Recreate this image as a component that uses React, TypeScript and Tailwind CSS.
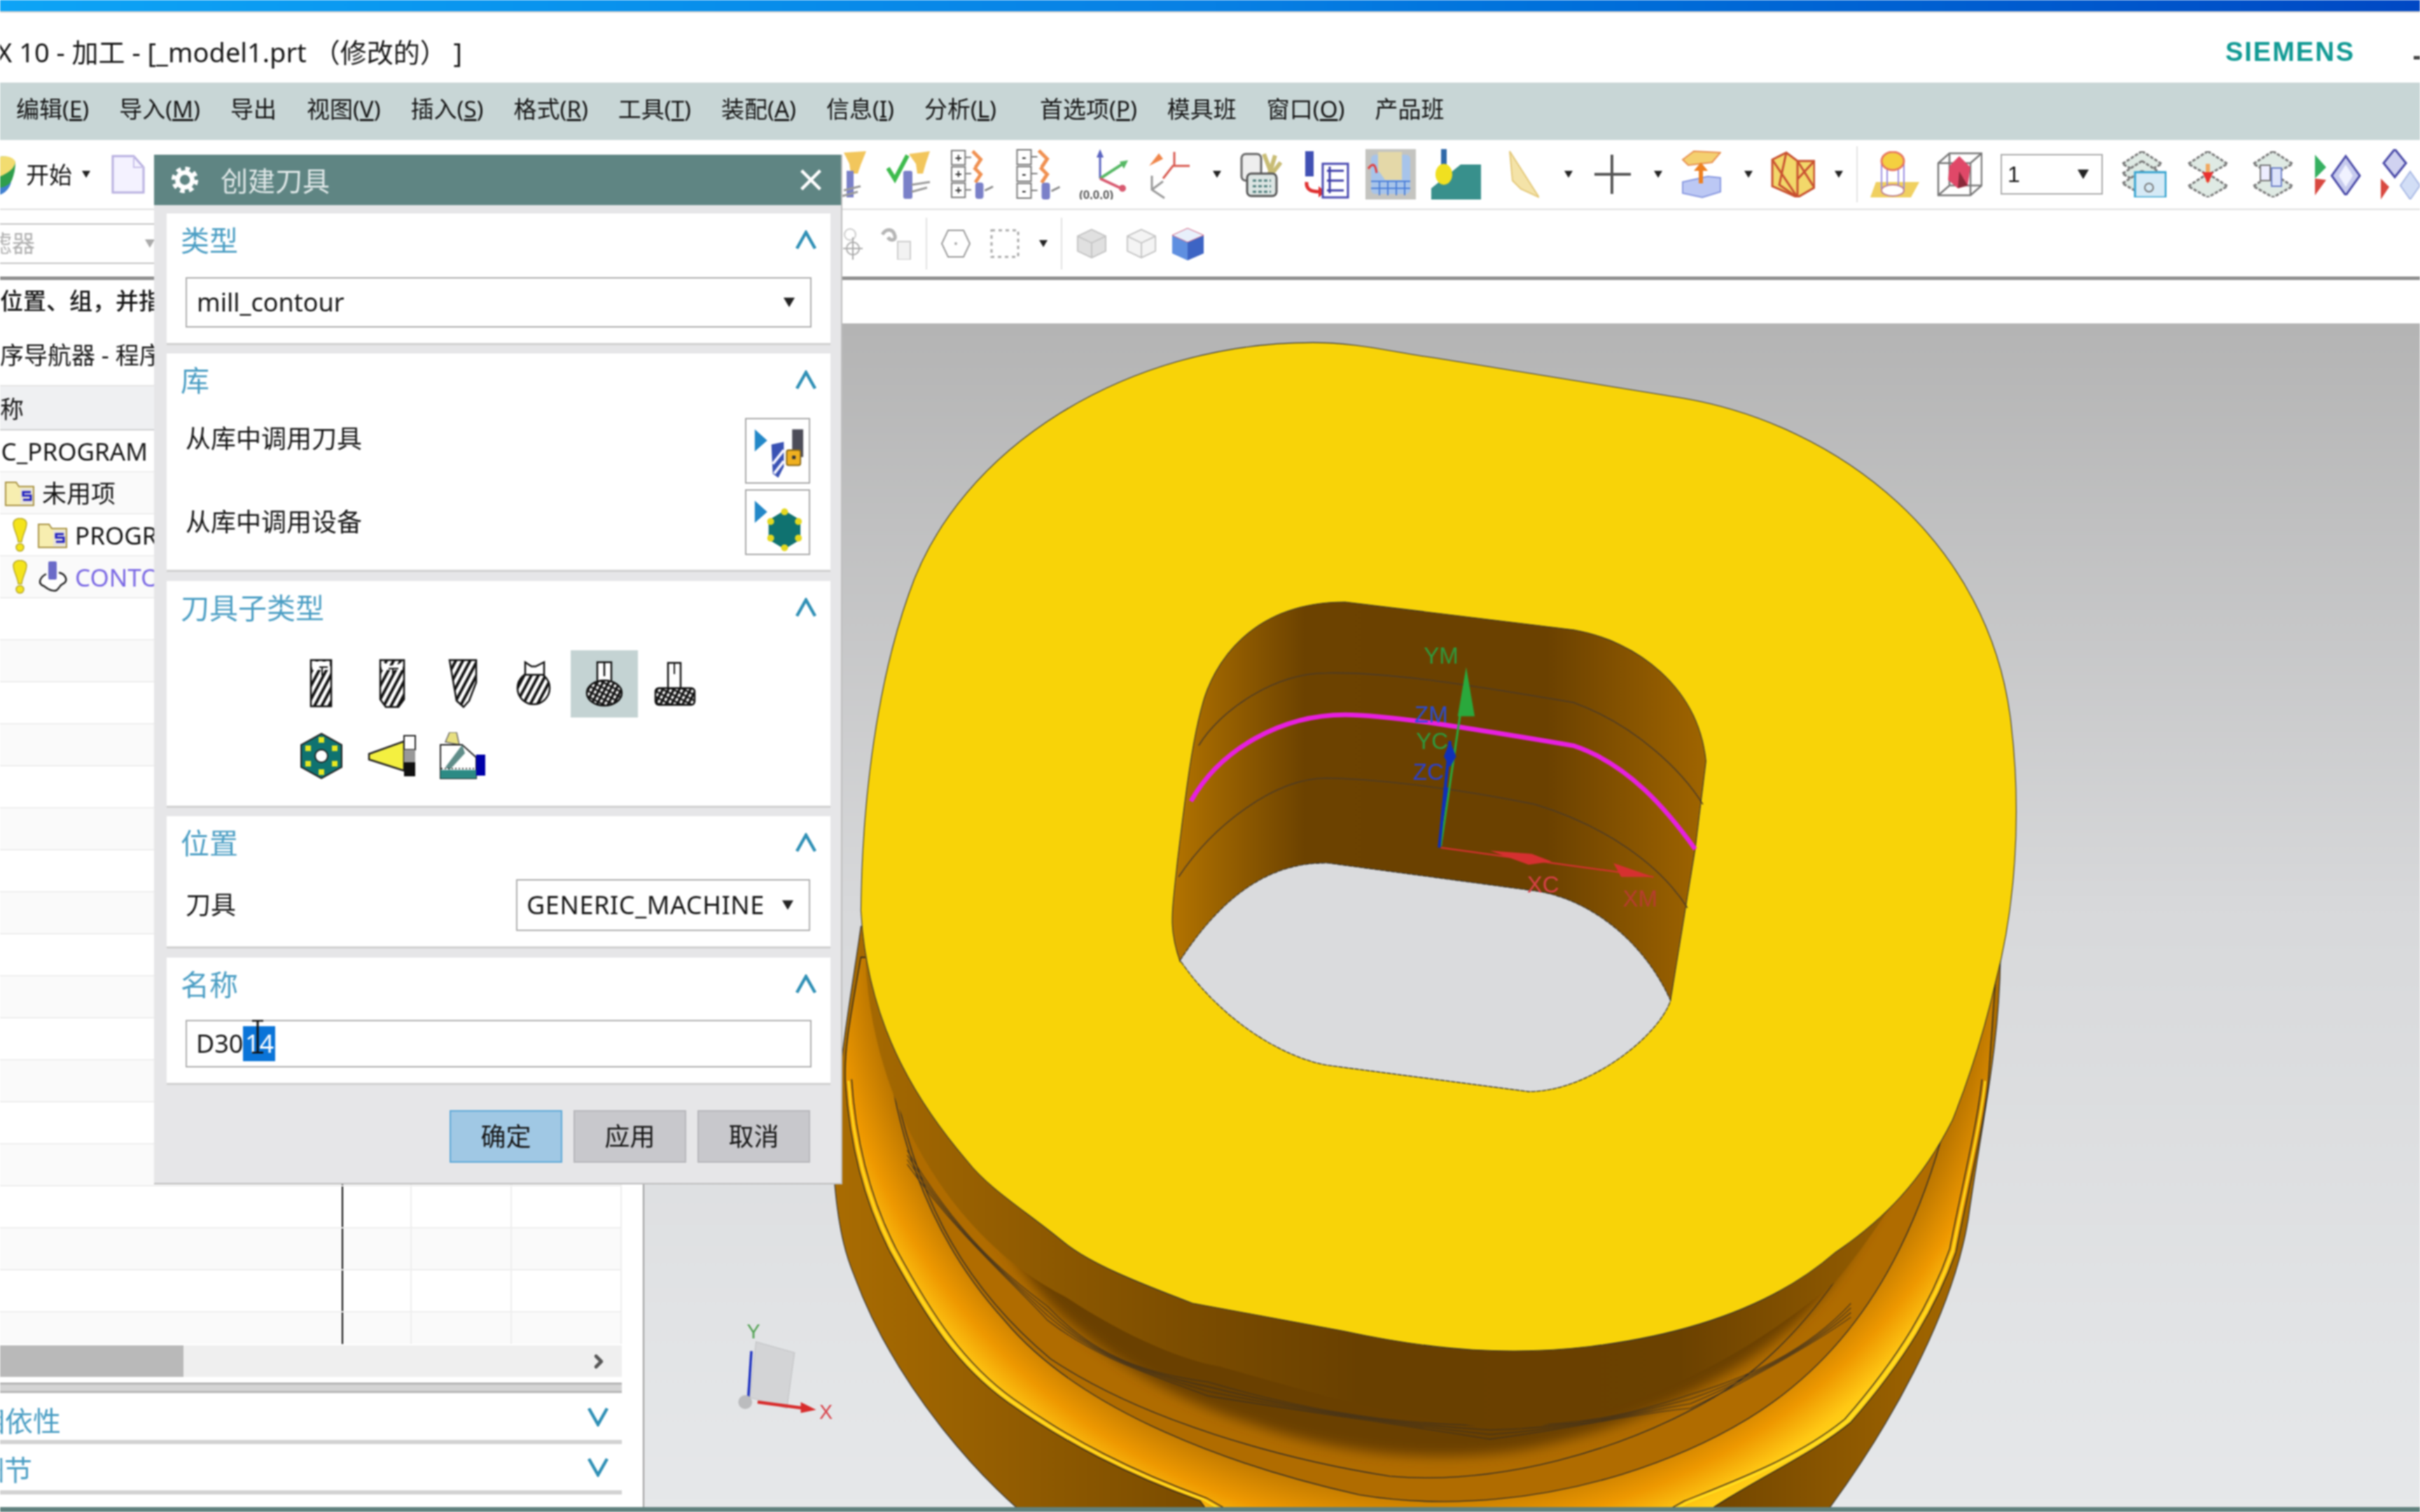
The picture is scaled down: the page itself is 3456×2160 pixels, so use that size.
import { ChevronRight } from "lucide-react"

const Drop = ({ className = "" }: { className?: string }) => (
  <svg viewBox="0 0 12 12" className={`w-[12px] h-[12px] ${className}`}>
    <polygon points="0,1 12,1 6,11" fill="#222" />
  </svg>
)

const Up = () => (
  <svg viewBox="0 0 32 28" className="w-[32px] h-[28px]">
    <path d="M3 26 L16 3 L29 26" fill="none" stroke="#2e8fb5" strokeWidth="4.5" />
  </svg>
)

const Down = () => (
  <svg viewBox="0 0 32 28" className="w-[32px] h-[28px]">
    <path d="M3 2 L16 25 L29 2" fill="none" stroke="#2e8fb5" strokeWidth="4.5" />
  </svg>
)

const Card = ({ title, className, children }: { title: string; className: string; children: React.ReactNode }) => (
  <div className={`bg-white border-b-[3px] border-[#d0d0d0] ${className}`}>
    <div className="h-[80px] flex items-center justify-between pl-[20px] pr-[19px] pb-[4px]">
      <span className="text-[41px] leading-none text-[#4b9ec4]">{title}</span>
      <Up />
    </div>
    {children}
  </div>
)

// toolbar icons
const Funnel = ({ className }: { className: string }) => (
  <svg viewBox="0 0 68 70" className={className}>
    <path d="M36 4 L68 2 L60 22 L56 34 L46 34 L44 20Z" fill="#f2c65c" />
    <rect x="40" y="30" width="10" height="38" fill="#7a80c8" />
    <path d="M36 58 L60 52 M34 66 L56 60" stroke="#9a9a9a" strokeWidth="3" />
  </svg>
)

const FunnelCheck = ({ className }: { className: string }) => (
  <svg viewBox="0 0 63 70" className={className}>
    <path d="M32 6 L62 2 L56 20 L52 34 L44 34 L42 20Z" fill="#f2c65c" />
    <path d="M2 26 L12 42 L30 8" fill="none" stroke="#3dbb4c" strokeWidth="6" />
    <rect x="24" y="30" width="13" height="40" rx="3" fill="#7a80c8" />
    <path d="M36 50 L62 46 M36 60 L58 54" stroke="#9a9a9a" strokeWidth="3" />
  </svg>
)

const TreeIcon = ({ className, sign }: { className: string; sign: string }) => (
  <svg viewBox="0 0 64 72" className={className}>
    {[1, 25, 49].map((y) => (
      <g key={y}>
        <rect x="1" y={y} width="20" height="21" fill="#fff" stroke="#777" strokeWidth="2" />
        <text x="11" y={y + 17} textAnchor="middle" fontSize="18" fill="#333" fontWeight="700">{sign}</text>
        <line x1="21" y1={y + 10} x2="30" y2={y + 10} stroke="#777" strokeWidth="2" />
      </g>
    ))}
    <path d="M32 2 L44 14 L36 26 M34 26 L44 36 L36 48" fill="none" stroke="#f09050" strokeWidth="5" />
    <rect x="36" y="48" width="12" height="24" rx="4" fill="#7a80c8" />
    <path d="M50 60 L62 54" stroke="#888" strokeWidth="3" />
  </svg>
)

const Csys1 = ({ className }: { className: string }) => (
  <svg viewBox="0 0 74 72" className={className}>
    <line x1="30" y1="42" x2="30" y2="6" stroke="#5a63c0" strokeWidth="3" />
    <polygon points="30,0 25,12 35,12" fill="#5a63c0" />
    <line x1="30" y1="42" x2="64" y2="20" stroke="#56b864" strokeWidth="4" />
    <polygon points="70,16 58,18 64,28" fill="#56b864" />
    <line x1="30" y1="42" x2="60" y2="56" stroke="#d85a70" strokeWidth="4" />
    <circle cx="62" cy="56" r="5" fill="#d85a70" />
    <text x="0" y="71" fontSize="17" fontWeight="700" fill="#555" fontFamily="'Liberation Sans'">(0,0,0)</text>
  </svg>
)

const Csys2 = ({ className }: { className: string }) => (
  <svg viewBox="0 0 64 72" className={className}>
    <path d="M22 42 L36 24 L60 24" fill="none" stroke="#d85a50" strokeWidth="3" />
    <line x1="38" y1="4" x2="38" y2="24" stroke="#d85a50" strokeWidth="3" />
    <polygon points="2,24 16,6 22,14" fill="#f0864a" />
    <path d="M6 38 L6 58 L24 70 M6 58 L22 46" fill="none" stroke="#999" strokeWidth="3" />
  </svg>
)

const Pens = ({ className }: { className: string }) => (
  <svg viewBox="0 0 60 66" className={className}>
    <rect x="2" y="4" width="28" height="38" rx="6" fill="#eee" stroke="#666" strokeWidth="3" />
    <path d="M34 4 L44 30 M50 6 L42 32 M58 16 L44 34" stroke="#c8bc74" strokeWidth="6" />
    <rect x="10" y="32" width="42" height="32" rx="6" fill="#dde6e4" stroke="#555" strokeWidth="3" />
    <path d="M18 42 H44 M18 50 H44 M18 58 H44" stroke="#4a7a78" strokeWidth="3" strokeDasharray="5 3" />
  </svg>
)

const Ops = ({ className }: { className: string }) => (
  <svg viewBox="0 0 66 70" className={className}>
    <rect x="3" y="2" width="12" height="36" fill="#4050b4" />
    <path d="M5 46 C4 56 10 60 24 60" fill="none" stroke="#e03030" strokeWidth="5" />
    <polygon points="22,52 32,60 22,68" fill="#e03030" />
    <rect x="28" y="20" width="36" height="48" fill="#fff" stroke="#4848b0" strokeWidth="3" />
    <path d="M34 30 H58 M34 44 H58 M34 58 H58 M38 24 V62" stroke="#3c3ca8" strokeWidth="3" />
  </svg>
)

const Machine = ({ className }: { className: string }) => (
  <svg viewBox="0 0 72 72" className={className}>
    <rect width="72" height="72" fill="#c4c4c0" />
    <rect x="8" y="8" width="56" height="56" rx="6" fill="#a7c4ea" />
    <path d="M18 4 H52 V44 H28 L18 30Z" fill="#e4d8a8" />
    <path d="M8 46 H64 M8 56 H64 M20 46 V66 M32 46 V66 M44 46 V66 M56 46 V66" stroke="#4a7ed8" strokeWidth="2" />
    <path d="M4 28 C10 20 14 20 16 34" fill="none" stroke="#e04040" strokeWidth="3" />
  </svg>
)

const Teal = ({ className }: { className: string }) => (
  <svg viewBox="0 0 71 72" className={className}>
    <polygon points="0,72 0,56 42,22 71,22 71,72" fill="#38908c" />
    <rect x="14" y="0" width="8" height="26" fill="#2f68a8" />
    <ellipse cx="18" cy="36" rx="12" ry="15" fill="#f0e020" />
  </svg>
)

const Tri = ({ className }: { className: string }) => (
  <svg viewBox="0 0 44 70" className={className}>
    <polygon points="2,2 44,68 18,56 6,44" fill="#f4e3a8" stroke="#e4c878" strokeWidth="2" />
  </svg>
)

const Plus = ({ className }: { className: string }) => (
  <svg viewBox="0 0 52 56" className={className}>
    <path d="M25 0 V56 M0 28 H52" stroke="#555" strokeWidth="4" />
  </svg>
)

const BoxArrow = ({ className }: { className: string }) => (
  <svg viewBox="0 0 57 70" className={className}>
    <polygon points="2,14 18,2 56,4 44,18 10,22" fill="#f4d070" stroke="#e89050" strokeWidth="2" />
    <polygon points="2,46 38,38 56,40 56,60 30,68 2,62" fill="#bcc8f4" stroke="#8898e0" strokeWidth="2" />
    <line x1="28" y1="48" x2="28" y2="26" stroke="#ee8020" strokeWidth="6" />
    <polygon points="28,18 18,30 38,30" fill="#ee8020" />
  </svg>
)

const Wire = ({ className }: { className: string }) => (
  <svg viewBox="0 0 63 66" className={className}>
    <polygon points="2,12 22,2 38,14 62,14 62,52 38,66 2,50" fill="#f2d86a" stroke="#c85030" strokeWidth="3" />
    <path d="M22 2 L12 48 L38 66 L38 14 M2 12 L38 66 M62 14 L38 40 M38 14 L62 52" fill="none" stroke="#c85030" strokeWidth="3" />
  </svg>
)

const CylPlane = ({ className }: { className: string }) => (
  <svg viewBox="0 0 70 66" className={className}>
    <polygon points="8,44 70,44 58,66 0,66" fill="#f0d060" />
    <path d="M16 12 V54 M48 12 V54 M24 14 V50 M40 14 V50" stroke="#9a8ce0" strokeWidth="2" />
    <ellipse cx="32" cy="56" rx="16" ry="8" fill="#fff" stroke="#c08090" strokeWidth="2" />
    <ellipse cx="32" cy="14" rx="16" ry="13" fill="#f4d040" stroke="#e87860" strokeWidth="3" />
  </svg>
)

const RedBox = ({ className }: { className: string }) => (
  <svg viewBox="0 0 65 64" className={className}>
    <path d="M2 16 L18 2 H64 V48 L48 62 H2Z M2 16 H48 V62 M48 16 L64 2 M2 62 L18 48 H64 M18 2 V48" fill="none" stroke="#777" strokeWidth="2.5" />
    <polygon points="32,6 48,22 44,48 30,52 16,40 18,20" fill="#e04868" />
    <polygon points="32,28 44,48 30,52" fill="#8a2a3a" />
  </svg>
)

const Plate = ({ y, x = 0 }: { y: number; x?: number }) => (
  <polygon points={`${x + 30},${y} ${x + 58},${y + 18} ${x + 30},${y + 34} ${x + 2},${y + 18}`} fill="#dfeae4" stroke="#777" strokeWidth="3" strokeDasharray="5 2" />
)

const Layers = ({ className }: { className: string }) => (
  <svg viewBox="0 0 65 66" className={className}>
    <Plate y={0} />
    <Plate y={14} />
    <Plate y={28} />
    <rect x="20" y="30" width="44" height="36" fill="#d6eaf6" stroke="#36a4d0" strokeWidth="3" />
    <circle cx="40" cy="52" r="6" fill="none" stroke="#777" strokeWidth="2" />
  </svg>
)

const LayerLink = ({ className }: { className: string }) => (
  <svg viewBox="0 0 61 66" className={className}>
    <Plate y={0} />
    <Plate y={32} />
    <line x1="30" y1="18" x2="30" y2="44" stroke="#f0a860" strokeWidth="6" />
    <polygon points="30,46 22,30 38,30" fill="#e83030" />
  </svg>
)

const LayerDoc = ({ className }: { className: string }) => (
  <svg viewBox="0 0 62 66" className={className}>
    <Plate y={0} />
    <Plate y={32} />
    <rect x="12" y="20" width="14" height="22" fill="#eef" stroke="#777" strokeWidth="2" />
    <rect x="28" y="24" width="14" height="26" fill="#dde4fa" stroke="#6a7ec8" strokeWidth="2" />
  </svg>
)

const Diamonds = ({ className }: { className: string }) => (
  <svg viewBox="0 0 66 60" className={className}>
    <polygon points="0,2 16,20 0,36" fill="#35b060" />
    <polygon points="0,36 16,38 0,60" fill="#d84840" />
    <polygon points="44,4 64,32 44,60 24,32" fill="#c8ccee" stroke="#4a4aa8" strokeWidth="3" />
    <polygon points="44,16 54,32 44,48 34,32" fill="#f0f2ff" />
  </svg>
)

const Diamonds2 = ({ className }: { className: string }) => (
  <svg viewBox="0 0 66 72" className={className}>
    <polygon points="22,0 38,20 22,40 6,20" fill="#d0d2f0" stroke="#4a4aa8" strokeWidth="3" />
    <polygon points="2,42 14,54 2,72" fill="#d84840" />
    <polygon points="44,32 58,52 44,72 30,52" fill="#d2def6" stroke="#a8b8e4" strokeWidth="2" />
  </svg>
)

// row two, mostly greyed out
const Target = ({ className }: { className: string }) => (
  <svg viewBox="0 0 30 46" className={className}>
    <circle cx="12" cy="10" r="8" fill="none" stroke="#ccc" strokeWidth="2" />
    <circle cx="16" cy="30" r="9" fill="none" stroke="#aaa" strokeWidth="2" />
    <path d="M16 14 V46 M2 30 H30" stroke="#aaa" strokeWidth="2" />
  </svg>
)

const Coil = ({ className }: { className: string }) => (
  <svg viewBox="0 0 48 46" className={className}>
    <path d="M4 10 C10 0 20 2 22 12 C24 18 16 20 12 14" fill="none" stroke="#b5b5b5" strokeWidth="5" />
    <rect x="26" y="20" width="18" height="26" fill="#f2f2f2" stroke="#ccc" strokeWidth="2" />
  </svg>
)

const Hex = ({ className }: { className: string }) => (
  <svg viewBox="0 0 42 40" className={className}>
    <polygon points="10,1 32,1 41,20 32,39 10,39 1,20" fill="none" stroke="#999" strokeWidth="2" />
    <circle cx="21" cy="20" r="2" fill="#aaa" />
  </svg>
)

const DashRect = ({ className }: { className: string }) => (
  <svg viewBox="0 0 43 42" className={className}>
    <rect x="2" y="2" width="38" height="38" fill="none" stroke="#aaa" strokeWidth="3" strokeDasharray="5 5" />
  </svg>
)

const GrayCube = ({ className, detail }: { className: string; detail?: boolean }) => (
  <svg viewBox="0 0 46 46" className={className}>
    <polygon points="23,2 44,12 44,34 23,44 2,34 2,12" fill={detail ? "#e0e0e0" : "#f4f4f4"} stroke="#c4c4c4" strokeWidth="2" />
    <path d="M2 12 L23 22 L44 12 M23 22 V44" fill="none" stroke="#c4c4c4" strokeWidth="2" />
  </svg>
)

const BlueCube = ({ className }: { className: string }) => (
  <svg viewBox="0 0 49 48" className={className}>
    <polygon points="2,12 24,22 24,48 2,38" fill="#5f8fe0" />
    <polygon points="47,12 24,22 24,48 47,38" fill="#3d64c4" />
    <polygon points="2,12 24,2 47,12 24,22" fill="#e8f0fb" stroke="#d06080" strokeWidth="1" />
  </svg>
)

// tool subtype pictures
const Hatch = ({ id, dense }: { id: string; dense?: boolean }) => (
  <pattern id={id} width={dense ? 7 : 9} height={dense ? 7 : 9} patternUnits="userSpaceOnUse" patternTransform="rotate(28)">
    <rect width="9" height="9" fill="#fff" />
    <rect width={dense ? 3.5 : 4} height="9" fill="#111" />
    {dense && <rect width="9" height="2.5" fill="#111" />}
  </pattern>
)

const toolStroke = { stroke: "#111", strokeWidth: 2.5 }

const ToolFlat = () => (
  <svg viewBox="0 0 33 71" className="w-[33px] h-[71px]">
    <Hatch id="h1" />
    <path d="M2 2 H31 V68 H2Z" fill="url(#h1)" {...toolStroke} />
    <rect x="4" y="4" width="25" height="12" fill="#fff" />
    <path d="M14 12 H26 M18 12 V24" stroke="#111" strokeWidth="2" />
  </svg>
)

const ToolRound = () => (
  <svg viewBox="0 0 38 71" className="w-[38px] h-[71px]">
    <Hatch id="h2" />
    <path d="M2 2 H36 V58 L28 69 H10 L2 58Z" fill="url(#h2)" {...toolStroke} />
    <path d="M4 4 L16 10 L28 8 L34 4 V16 H4Z" fill="#fff" />
    <path d="M14 14 H28 M20 14 V24" stroke="#111" strokeWidth="2" />
  </svg>
)

const ToolTaper = () => (
  <svg viewBox="0 0 42 71" className="w-[42px] h-[71px]">
    <Hatch id="h3" />
    <path d="M2 2 H40 V34 L30 60 L22 69 L12 60 Z" fill="url(#h3)" {...toolStroke} />
  </svg>
)

const ToolBall = () => (
  <svg viewBox="0 0 50 65" className="w-[50px] h-[65px]">
    <Hatch id="h4" />
    <circle cx="25" cy="39" r="23" fill="url(#h4)" {...toolStroke} />
    <path d="M13 2 L22 8 L28 8 L40 2 V20 H13Z" fill="#fff" {...toolStroke} />
  </svg>
)

const ToolMill = () => (
  <svg viewBox="0 0 54 66" className="w-[54px] h-[66px]">
    <Hatch id="h5" dense />
    <rect x="17" y="2" width="20" height="34" fill="#fff" {...toolStroke} />
    <path d="M27 2 V22" stroke="#111" strokeWidth="2.5" />
    <ellipse cx="27" cy="46" rx="25" ry="18" fill="url(#h5)" {...toolStroke} />
  </svg>
)

const ToolDisc = () => (
  <svg viewBox="0 0 60 64" className="w-[60px] h-[64px]">
    <Hatch id="h6" dense />
    <rect x="20" y="2" width="18" height="42" fill="#fff" {...toolStroke} />
    <path d="M29 2 V18" stroke="#111" strokeWidth="2" />
    <rect x="2" y="38" width="56" height="24" rx="5" fill="url(#h6)" {...toolStroke} />
  </svg>
)

const Insert = ({ className, hole }: { className: string; hole?: boolean }) => (
  <svg viewBox="0 0 62 66" className={className}>
    <polygon points="31,1 60,17 60,49 31,65 2,49 2,17" fill="#0f7270" stroke="#222" strokeWidth="2" />
    {hole && <circle cx="31" cy="33" r="9" fill="#fff" stroke="#222" strokeWidth="2" />}
    {[[31, 10], [50, 22], [50, 44], [31, 56], [12, 44], [12, 22]].map(([x, y]) => (
      <rect key={`${x}-${y}`} x={x - 4} y={y - 4} width="8" height="8" fill="#e8e820" />
    ))}
  </svg>
)

const ToolCone = () => (
  <svg viewBox="0 0 69 62" className="w-[69px] h-[62px]">
    <polygon points="2,28 52,10 52,52 2,36" fill="#f4f040" stroke="#222" strokeWidth="2.5" />
    <rect x="52" y="2" width="16" height="20" fill="#fff" stroke="#222" strokeWidth="2" />
    <rect x="52" y="22" width="16" height="18" fill="#999" />
    <rect x="52" y="40" width="16" height="20" fill="#111" />
  </svg>
)

const ToolTurn = () => (
  <svg viewBox="0 0 65 68" className="w-[65px] h-[68px]">
    <polygon points="8,14 14,0 24,0 28,18" fill="#e8e080" stroke="#666" strokeWidth="1.5" />
    <path d="M1 18 H32 L52 36 V66 H1Z" fill="#fff" stroke="#222" strokeWidth="2" />
    <polygon points="32,18 36,30 14,54 8,50" fill="#5f8d89" />
    <rect x="1" y="54" width="51" height="12" fill="#2c8a84" />
    <path d="M2 52 H52" stroke="#333" strokeWidth="2" strokeDasharray="2 3" />
    <rect x="52" y="32" width="13" height="30" fill="#0000a8" />
  </svg>
)

const FolderIcon = () => (
  <svg viewBox="0 0 42 38" className="w-[42px] h-[38px] shrink-0">
    <path d="M1 4 H16 L20 10 H41 V37 H1Z" fill="#f7eeb0" stroke="#a89244" strokeWidth="2" />
    <rect x="22" y="12" width="18" height="24" fill="#e8e4d8" />
    <path d="M37 18 H26 V23 H37 V29 H26" fill="none" stroke="#1c1cc0" strokeWidth="3" />
  </svg>
)

const Bang = () => (
  <svg viewBox="0 0 21 49" className="w-[21px] h-[49px] shrink-0">
    <path d="M1 8 C1 -2 20 -2 20 8 C20 16 14 24 13 34 H8 C7 24 1 16 1 8Z" fill="#f4e41c" stroke="#b8a828" strokeWidth="1.5" />
    <circle cx="10.5" cy="42" r="5.5" fill="#f4e41c" stroke="#b8a828" strokeWidth="1.5" />
  </svg>
)

const MachineNode = () => (
  <svg viewBox="0 0 42 44" className="w-[42px] h-[44px] shrink-0">
    <path d="M12 18 C4 22 0 30 6 34 C12 36 14 42 24 42 C30 42 30 34 36 32 C44 28 40 18 30 16" fill="#fff" stroke="#222" strokeWidth="2.5" />
    <rect x="15" y="0" width="12" height="26" rx="2" fill="#6a6ac8" />
  </svg>
)

const rows: { indent: string; icon?: React.ReactNode; text?: string; color?: string }[] = [
  { indent: "", text: "NC_PROGRAM" },
  { indent: "pl-[7px]", icon: <FolderIcon />, text: "未用项" },
  { indent: "pl-[18px]", icon: <><Bang /><FolderIcon /></>, text: "PROGRAM" },
  { indent: "pl-[18px]", icon: <><Bang /><MachineNode /></>, text: "CONTOUR", color: "text-[#7a68e4]" },
]

const rimLeft = "M547 701 C550 745 560 780 576 811 C600 855 620 885 652 908 C690 935 730 955 777 972 L800 985"
const rimRight = "M1288 701 C1285 730 1275 770 1267 811 C1255 845 1235 880 1199 921 C1170 945 1130 960 1095 974 L1075 985"

const CadView = () => (
  <svg viewBox="416.5 209.6 1151.5 766.4" preserveAspectRatio="none" className="w-full h-full block">
    <defs>
      <linearGradient id="wall" gradientUnits="userSpaceOnUse" x1="540" y1="0" x2="1300" y2="0">
        <stop offset="0" stopColor="#a96c02" />
        <stop offset="0.3" stopColor="#7c4d00" />
        <stop offset="0.45" stopColor="#694000" />
        <stop offset="0.72" stopColor="#6b4100" />
        <stop offset="1" stopColor="#ad6e00" />
      </linearGradient>
      <linearGradient id="holeWall" gradientUnits="userSpaceOnUse" x1="758" y1="0" x2="1106" y2="0">
        <stop offset="0" stopColor="#b47400" />
        <stop offset="0.25" stopColor="#6c4200" />
        <stop offset="0.7" stopColor="#6b4100" />
        <stop offset="1" stopColor="#a06500" />
      </linearGradient>
      <radialGradient id="band" gradientUnits="userSpaceOnUse" cx="925" cy="600" r="425">
        <stop offset="0.85" stopColor="#b87400" />
        <stop offset="0.92" stopColor="#ee9800" />
        <stop offset="0.97" stopColor="#ffc814" />
        <stop offset="1" stopColor="#ffd818" />
      </radialGradient>
      <filter id="soft" x="-5%" y="-5%" width="110%" height="110%">
        <feGaussianBlur stdDeviation="4" />
      </filter>
    </defs>

    {/* lower body */}
    <path d="M557 600 C550 650 538 710 540 767 C543 800 548 815 553 827 C580 900 640 965 675 990 L1175 990 C1225 925 1265 850 1275 790 C1285 720 1295 680 1296 620 Z" fill="url(#wall)" stroke="#3a3a3a" strokeWidth="0.6" />
    <path d={`M557 620 C550 660 546 680 547 701 C550 745 560 780 576 811 C600 855 620 885 652 908 C690 935 730 955 777 972 L790 990 L1090 990 C1130 960 1170 945 1199 921 C1235 880 1255 845 1267 811 C1275 770 1285 730 1288 701 L1293 630 Z`} fill="url(#band)" stroke="#222" strokeWidth="0.6" />
    <path d={rimLeft} transform="translate(2 -1)" fill="none" stroke="#ffe020" strokeWidth="1.2" />
    <path d={rimLeft} transform="translate(4 -2)" fill="none" stroke="#222" strokeWidth="0.6" />
    <path d={rimRight} transform="translate(-2 -1)" fill="none" stroke="#ffe020" strokeWidth="1.2" />
    <path d={rimRight} transform="translate(-4 -2)" fill="none" stroke="#222" strokeWidth="0.6" />
    <path d="M570 640 C575 730 600 800 650 855 C700 915 800 950 880 968 C940 978 1000 970 1050 955 C1130 930 1190 890 1230 810 C1255 760 1270 700 1275 640 Z" fill="#b06c00" stroke="#2a2a2a" strokeWidth="0.6" />
    <path d="M574 680 C590 770 620 830 680 880 C740 920 830 945 900 956 C970 962 1050 940 1110 905 C1170 870 1215 800 1245 720" fill="none" stroke="#2a2a2a" strokeWidth="0.6" />
    <path d="M590 640 C600 730 640 800 680 845 C720 885 770 910 810 922 C860 940 920 948 980 940 C1040 930 1120 900 1170 850 C1210 810 1250 720 1262 640 Z" fill="#6b4100" filter="url(#soft)" />
    {[0, 3, 6, 9].map((d) => (
      <path key={d} d={`M587 ${745 + d} C620 800 650 825 678 ${846 + d} C710 880 745 890 782 ${895 + d} C850 915 910 923 965 ${923 + d} C1020 925 1060 915 1095 ${903 + d} C1140 890 1175 870 1199 ${844 + d}`} fill="none" stroke="#3c3020" strokeWidth="0.5" />
    ))}

    {/* top plate and bore */}
    <path d="M560 600 C556 700 610 800 690 840 C720 860 760 880 790 885 C860 905 930 925 985 925 C1060 915 1130 880 1189 830 C1230 780 1280 700 1293 620 Z" fill="url(#wall)" />
    <path d="M850 222 C880 222 900 228 930 232 L1090 258 C1190 275 1290 350 1303 470 C1310 530 1305 590 1293 635 C1285 670 1275 700 1265 725 C1245 765 1220 790 1189 811 C1150 845 1095 864 1030 872 C980 878 930 875 870 862 L772 844 C735 830 705 818 688 804 C665 785 640 770 626 752 C590 710 561 660 557 590 C558 500 572 430 588 385 C620 290 730 222 850 222 Z" fill="#f8d308" stroke="#333" strokeWidth="0.5" />
    <path d="M764 623 C756 600 759 590 762 560 C768 510 772 480 778 458 C785 430 810 390 871 390 L1019 408 C1060 415 1100 445 1105 493 L1098 550 L1082 648 L1050 680 L860 640 Z" fill="url(#holeWall)" stroke="#333" strokeWidth="0.5" />
    <path d="M764 622 C785 590 815 558 860 559 L994 577 C1030 582 1065 610 1082 648 C1075 670 1030 707 990 707 L860 690 C830 685 790 660 764 622 Z" fill="#dadbdd" stroke="#333" strokeWidth="0.6" strokeDasharray="3 0.5" />
    <path d="M776 483 C790 460 825 436 859 436 C900 435 960 445 1019 455 C1060 470 1090 500 1103 521" fill="none" stroke="#4a3a28" strokeWidth="0.7" />
    <path d="M763 568 C785 535 825 504 859 504 C900 505 950 512 994 521 C1040 535 1075 560 1093 588" fill="none" stroke="#4a3a28" strokeWidth="0.7" />
    <path d="M771 519 C790 485 830 463 871 463 C900 463 960 473 1019 483 C1055 495 1080 525 1098 550" fill="none" stroke="#e71fe0" strokeWidth="3" />

    {/* work and machine axes */}
    <path d="M933 548 L949 440" stroke="#2aa83c" strokeWidth="1.4" />
    <polygon points="949.5,432 944,464 955,464" fill="#2aa83c" />
    <path d="M932 549 L939 480" stroke="#1030b8" strokeWidth="2" />
    <polygon points="939,480 935,490 939,497 943,490" fill="#1030b8" />
    <polygon points="932,549 935,510 938,510" fill="#1030b8" />
    <line x1="933" y1="549" x2="1071" y2="568" stroke="#d63030" strokeWidth="1" />
    <polygon points="965,551 992,553 1005,558 990,560" fill="#d63030" />
    <polygon points="1071,568 1045,559 1050,568" fill="#d63030" />
    <g fontFamily="'Liberation Sans'" fontSize="15">
      <text x="922" y="430" fill="#2d9b3e">YM</text>
      <text x="916" y="468" fill="#2a4cd6">ZM</text>
      <text x="917" y="485" fill="#2d9b3e">YC</text>
      <text x="915" y="505" fill="#2a40d0">ZC</text>
      <text x="989" y="578" fill="#d84048">XC</text>
      <text x="1051" y="587" fill="#b83c30">XM</text>
    </g>

    {/* absolute csys */}
    <polygon points="489,869 514,876 509,912 485,905" fill="#d3d4d6" stroke="#c4c5c7" strokeWidth="0.6" />
    <path d="M486 875 L484 905" stroke="#1a2ec0" strokeWidth="1.6" />
    <line x1="490" y1="908" x2="520" y2="912" stroke="#d82c2c" strokeWidth="2" />
    <polygon points="528,913 518,908 518,915" fill="#d82c2c" />
    <circle cx="482" cy="908" r="4.5" fill="#bbbcbe" />
    <g fontFamily="'Liberation Sans'" fontSize="13">
      <text x="483" y="867" fill="#4fa050">Y</text>
      <text x="530" y="919" fill="#d84048">X</text>
    </g>
  </svg>
)

const App = () => (
  <div className="relative w-[3456px] h-[2160px] overflow-hidden bg-white flex flex-col font-['Noto_Sans','Noto_Sans_CJK_SC',sans-serif] text-[#151515] blur-[0.8px]">
    {/* os title strip */}
    <div className="h-[18px] shrink-0 bg-linear-to-r from-[#0ea4f6] via-[#0880e4] to-[#0048c4] border-b-2 border-[#d8d4d0]" />

    {/* app title */}
    <div className="h-[100px] shrink-0 flex items-center pt-[12px]">
      <span className="-ml-[5px] text-[38px] leading-none whitespace-pre">X 10 - 加工 - [_model1.prt （修改的） ]</span>
      <span className="ml-auto mr-[84px] font-['Liberation_Sans'] font-bold text-[38px] leading-none tracking-[2px] text-[#119a94]">SIEMENS</span>
      <div className="w-[9px] h-[5px] bg-[#444] mt-[16px]" />
    </div>

    {/* menu */}
    <div className="h-[82px] shrink-0 bg-[#c8d6d6] flex items-center pl-[23px] pb-[8px] gap-[43px] text-[33px] leading-none">
      <span>编辑(<u>E</u>)</span>
      <span>导入(<u>M</u>)</span>
      <span>导出</span>
      <span>视图(<u>V</u>)</span>
      <span>插入(<u>S</u>)</span>
      <span>格式(<u>R</u>)</span>
      <span>工具(<u>T</u>)</span>
      <span>装配(<u>A</u>)</span>
      <span>信息(<u>I</u>)</span>
      <span>分析(<u>L</u>)</span>
      <span className="ml-[19px]">首选项(<u>P</u>)</span>
      <span>模具班</span>
      <span>窗口(<u>O</u>)</span>
      <span>产品班</span>
    </div>

    {/* toolbar one */}
    <div className="h-[100px] shrink-0 flex items-center border-b-2 border-[#dedede] overflow-hidden [&>*]:shrink-0">
      <svg viewBox="0 0 22 62" className="w-[22px] h-[62px]">
        <path d="M0 6 C14 4 20 10 22 14 C22 30 16 50 0 60Z" fill="#2f9e4c" />
        <path d="M0 6 C8 4 20 6 22 14 C20 24 10 30 0 34Z" fill="#f2dc70" />
        <path d="M0 60 C8 58 14 50 16 42 C12 46 6 50 0 50Z" fill="#3f7fd0" />
      </svg>
      <span className="ml-[15px] text-[33px] leading-none w-[67px]">开始</span>
      <Drop className="ml-[13px]" />
      <svg viewBox="0 0 48 56" className="ml-[30px] w-[48px] h-[56px]">
        <path d="M2 2 H32 L46 18 V54 H2Z" fill="#f4f2ff" stroke="#b8b0e0" strokeWidth="3" />
        <path d="M32 2 V18 H46" fill="none" stroke="#c8c0e8" strokeWidth="2" />
      </svg>
      <Funnel className="ml-[962px] w-[68px] h-[70px]" />
      <FunnelCheck className="ml-[29px] w-[63px] h-[70px]" />
      <TreeIcon sign="+" className="ml-[29px] w-[62px] h-[72px]" />
      <TreeIcon sign="-" className="ml-[31px] w-[65px] h-[72px]" />
      <Csys1 className="ml-[25px] w-[74px] h-[72px]" />
      <Csys2 className="ml-[24px] w-[64px] h-[72px]" />
      <Drop className="ml-[29px]" />
      <Pens className="ml-[27px] w-[60px] h-[66px]" />
      <Ops className="ml-[30px] w-[66px] h-[70px]" />
      <Machine className="ml-[23px] w-[72px] h-[72px]" />
      <Teal className="ml-[22px] w-[71px] h-[72px]" />
      <Tri className="ml-[39px] w-[44px] h-[70px]" />
      <Drop className="ml-[36px]" />
      <Plus className="ml-[31px] w-[52px] h-[56px]" />
      <Drop className="ml-[33px]" />
      <BoxArrow className="ml-[27px] w-[57px] h-[70px]" />
      <Drop className="ml-[33px]" />
      <Wire className="ml-[26px] w-[63px] h-[66px]" />
      <Drop className="ml-[28px]" />
      <div className="ml-[19px] w-[2px] h-[80px] bg-[#e4e4e4]" />
      <CylPlane className="ml-[18px] w-[70px] h-[66px]" />
      <RedBox className="ml-[25px] w-[65px] h-[64px]" />
      <div className="ml-[26px] w-[146px] h-[58px] border-2 border-[#aaa] flex items-center justify-between pl-[8px] pr-[16px] text-[32px] font-['Liberation_Sans']">
        <span>1</span>
        <Drop className="w-[20px] h-[16px]" />
      </div>
      <Layers className="ml-[26px] w-[65px] h-[66px]" />
      <LayerLink className="ml-[29px] w-[61px] h-[66px]" />
      <LayerDoc className="ml-[32px] w-[62px] h-[66px]" />
      <Diamonds className="ml-[28px] w-[66px] h-[60px]" />
      <Diamonds2 className="ml-[26px] w-[66px] h-[72px]" />
    </div>

    {/* toolbar two */}
    <div className="h-[100px] shrink-0 flex items-center border-b-[5px] border-[#8f8f8f] [&>*]:shrink-0">
      <div className="w-[225px] h-[58px] border-y-2 border-[#c4c4c4] flex items-center justify-between pr-[4px] overflow-hidden">
        <span className="-ml-[16px] text-[33px] leading-none text-[#b0b0b0]">滤器</span>
        <svg viewBox="0 0 14 12" className="w-[14px] h-[12px]"><polygon points="0,0 14,0 7,12" fill="#aaa" /></svg>
      </div>
      <Target className="ml-[977px] w-[30px] h-[46px]" />
      <Coil className="ml-[24px] w-[48px] h-[46px]" />
      <div className="ml-[18px] w-[2px] h-[74px] bg-[#e2e2e2]" />
      <Hex className="ml-[20px] w-[42px] h-[40px]" />
      <DashRect className="ml-[28px] w-[43px] h-[42px]" />
      <Drop className="ml-[27px]" />
      <div className="ml-[19px] w-[2px] h-[74px] bg-[#e2e2e2]" />
      <GrayCube detail className="ml-[18px] w-[48px] h-[44px]" />
      <GrayCube className="ml-[25px] w-[44px] h-[44px]" />
      <BlueCube className="ml-[20px] w-[49px] h-[48px]" />
    </div>

    <div className="flex-1 min-h-0 flex">
      {/* navigator */}
      <div className="w-[920px] shrink-0 border-r-2 border-[#9c9c9c] pr-[30px] flex flex-col whitespace-nowrap overflow-hidden">
        <div className="h-[62px] shrink-0 flex items-center pb-[4px] text-[33px] leading-none font-medium">位置、组，并指定</div>
        <div className="h-[90px] shrink-0 flex items-center border-b-2 border-[#e4e4e4] -ml-[34px] pt-[2px] text-[34px] leading-none">程序导航器 - 程序顺序</div>
        <div className="h-[63px] shrink-0 bg-[#eff0f2] border-b-2 border-[#cfd0d2] flex items-center -ml-[34px] pt-[3px] text-[34px] leading-none">名称</div>
        <div className="h-[1305px] shrink-0 overflow-hidden">
          {Array.from({ length: 22 }, (_, i) => (
            <div key={i} className={`h-[60px] flex border-b-2 border-[#eeeeee] ${i % 2 ? "bg-[#fafafa]" : "bg-white"}`}>
              <div className={`w-[490px] shrink-0 border-r-2 border-black flex items-center gap-[11px] text-[35px] leading-none ${rows[i]?.indent ?? ""} ${rows[i]?.color ?? ""} ${i === 0 ? "-ml-[25px] w-[515px]" : ""}`}>
                {rows[i]?.icon && <div className="flex items-center gap-[15px]">{rows[i].icon}</div>}
                {rows[i]?.text}
              </div>
              <div className="w-[98px] shrink-0 border-r-2 border-[#eeeeee]" />
              <div className="w-[143px] shrink-0 border-r-2 border-[#eeeeee]" />
              <div className="flex-1 border-r-2 border-[#eeeeee]" />
            </div>
          ))}
        </div>
        <div className="h-[55px] shrink-0 pt-[2px] pb-[8px]">
          <div className="h-full bg-[#efefef] flex items-center justify-between pr-[18px]">
            <div className="w-[262px] h-full bg-[#b9b9b9]" />
            <ChevronRight className="w-[30px] h-[38px] text-[#555]" strokeWidth={4} />
          </div>
        </div>
        <div className="h-[15px] shrink-0 bg-[#d4d4d4] border-y-[3px] border-[#b5b5b5]" />
        <div className="h-[73px] shrink-0 border-b-[6px] border-[#d2d2d2] flex items-center justify-between pr-[18px]">
          <span className="-ml-[33px] mt-[12px] text-[40px] leading-none text-[#4b9ec4]">相依性</span>
          <Down />
        </div>
        <div className="h-[72px] shrink-0 border-b-[6px] border-[#d2d2d2] flex items-center justify-between pr-[18px]">
          <span className="-ml-[34px] mt-[8px] text-[40px] leading-none text-[#4b9ec4]">细节</span>
          <Down />
        </div>
      </div>

      {/* graphics window */}
      <div className="flex-1 min-w-0 flex flex-col">
        <div className="h-[62px] shrink-0 bg-white" />
        <div className="flex-1 min-h-0 bg-linear-to-b from-[#b4b4b4] via-[#d8d9db] to-[#e6e8ea]">
          <CadView />
        </div>
      </div>
    </div>

    <div className="h-[7px] shrink-0 bg-[#5f807d]" />

    {/* create tool dialog */}
    <div className="absolute left-[220px] top-[221px] w-[983px] h-[1471px] bg-[#e6e6e8] border-b-2 border-r-2 border-[#bdbdbd] flex flex-col">
      <div className="h-[72px] shrink-0 bg-[#5f8583] flex items-center pl-[23px] pr-[27px] text-white">
        <svg viewBox="0 0 44 44" className="w-[42px] h-[42px]">
          <circle cx="22" cy="22" r="11" fill="none" stroke="#fff" strokeWidth="7" />
          <circle cx="22" cy="22" r="17" fill="none" stroke="#fff" strokeWidth="6" strokeDasharray="7 6.35" />
        </svg>
        <span className="ml-[30px] text-[39px] leading-none text-[#e0e8e8]">创建刀具</span>
        <svg viewBox="0 0 36 36" className="ml-auto w-[32px] h-[32px]">
          <path d="M3 3 L33 33 M33 3 L3 33" stroke="#fff" strokeWidth="5" />
        </svg>
      </div>
      <div className="flex-1 flex flex-col pt-[12px] pl-[18px] pr-[15px] text-[36px] leading-none">
        <Card title="类型" className="h-[188px] mb-[12px]">
          <div className="mt-[11px] mx-[27px] h-[72px] border-2 border-[#aeaeae] flex items-center justify-between pl-[14px] pr-[20px]">
            <span>mill_contour</span>
            <Drop className="w-[20px] h-[16px]" />
          </div>
        </Card>

        <Card title="库" className="h-[312px] mb-[13px]">
          <div className="mt-[12px] pl-[27px] pr-[29px] flex flex-col gap-[8px]">
            <div className="flex justify-between">
              <span className="mt-[12px] text-[36px]">从库中调用刀具</span>
              <div className="w-[93px] h-[94px] border-2 border-[#a8a8a8] bg-white">
                <svg viewBox="0 0 90 90" className="w-full h-full">
                  <polygon points="12,14 30,30 12,46" fill="#2388c8" />
                  <polygon points="36,36 54,32 54,68 46,84 38,78" fill="#3a52b4" />
                  <path d="M38 64 L54 44 M40 78 L54 60" stroke="#f4f4ff" strokeWidth="4" />
                  <rect x="66" y="14" width="16" height="40" fill="#4c4c58" />
                  <rect x="58" y="44" width="20" height="22" rx="3" fill="#efb020" stroke="#8a6818" strokeWidth="2" />
                  <rect x="66" y="52" width="5" height="5" fill="#333" />
                </svg>
              </div>
            </div>
            <div className="flex justify-between">
              <span className="mt-[29px] text-[36px]">从库中调用设备</span>
              <div className="w-[93px] h-[94px] border-2 border-[#a8a8a8] bg-white">
                <svg viewBox="0 0 90 90" className="w-full h-full">
                  <polygon points="12,14 30,30 12,46" fill="#2388c8" />
                  <polygon points="55,28 78,42 78,70 55,84 32,70 32,42" fill="#0f7270" />
                  {[[55, 30], [75, 44], [75, 68], [55, 82], [35, 68], [35, 44]].map(([x, y]) => (
                    <circle key={`${x}${y}`} cx={x} cy={y} r="5" fill="#e4d820" />
                  ))}
                </svg>
              </div>
            </div>
          </div>
        </Card>

        <Card title="刀具子类型" className="h-[324px] mb-[12px]">
          <div className="mt-[15px] ml-[170px] grid grid-cols-[repeat(6,101px)] auto-rows-[103px]">
            <div className="flex items-center justify-center"><ToolFlat /></div>
            <div className="flex items-center justify-center"><ToolRound /></div>
            <div className="flex items-center justify-center"><ToolTaper /></div>
            <div className="flex items-center justify-center"><ToolBall /></div>
            <div className="flex items-center justify-center">
              <div className="w-[96px] h-[96px] bg-[#c4d3d3] flex items-center justify-center"><ToolMill /></div>
            </div>
            <div className="flex items-center justify-center"><ToolDisc /></div>
            <div className="flex items-center justify-center"><Insert hole className="w-[62px] h-[66px]" /></div>
            <div className="flex items-center justify-center"><ToolCone /></div>
            <div className="flex items-center justify-center"><ToolTurn /></div>
          </div>
        </Card>

        <Card title="位置" className="h-[189px] mb-[13px]">
          <div className="mt-[10px] pl-[27px] pr-[29px] flex items-center justify-between">
            <span className="text-[36px]">刀具</span>
            <div className="w-[420px] h-[74px] border-2 border-[#aeaeae] flex items-center justify-between pl-[13px] pr-[20px] text-[36px] tracking-[0.6px]">
              <span>GENERIC_MACHINE</span>
              <Drop className="w-[20px] h-[16px]" />
            </div>
          </div>
        </Card>

        <Card title="名称" className="h-[182px]">
          <div className="relative mt-[9px] mx-[27px] h-[68px] border-2 border-[#aeaeae] flex items-center pl-[13px]">
            <span>D30</span>
            <span className="w-[46px] h-[50px] bg-[#0a74d8] text-white flex items-center justify-center">14</span>
            <svg viewBox="0 0 20 48" className="absolute left-[91px] -top-[2px] w-[20px] h-[48px]">
              <path d="M2 1 H18 M2 47 H18 M10 1 V47" stroke="#111" strokeWidth="3" />
            </svg>
          </div>
        </Card>

        <div className="mt-[36px] flex justify-end gap-[16px] pr-[29px] text-[36px]">
          <div className="w-[161px] h-[75px] bg-[#a0c8e4] border-2 border-[#5ba8d8] flex items-center justify-center">确定</div>
          <div className="w-[161px] h-[75px] bg-[#c8c8cc] border-2 border-[#b6b6ba] flex items-center justify-center">应用</div>
          <div className="w-[161px] h-[75px] bg-[#c8c8cc] border-2 border-[#b6b6ba] flex items-center justify-center">取消</div>
        </div>
      </div>
    </div>
  </div>
)

export default App
